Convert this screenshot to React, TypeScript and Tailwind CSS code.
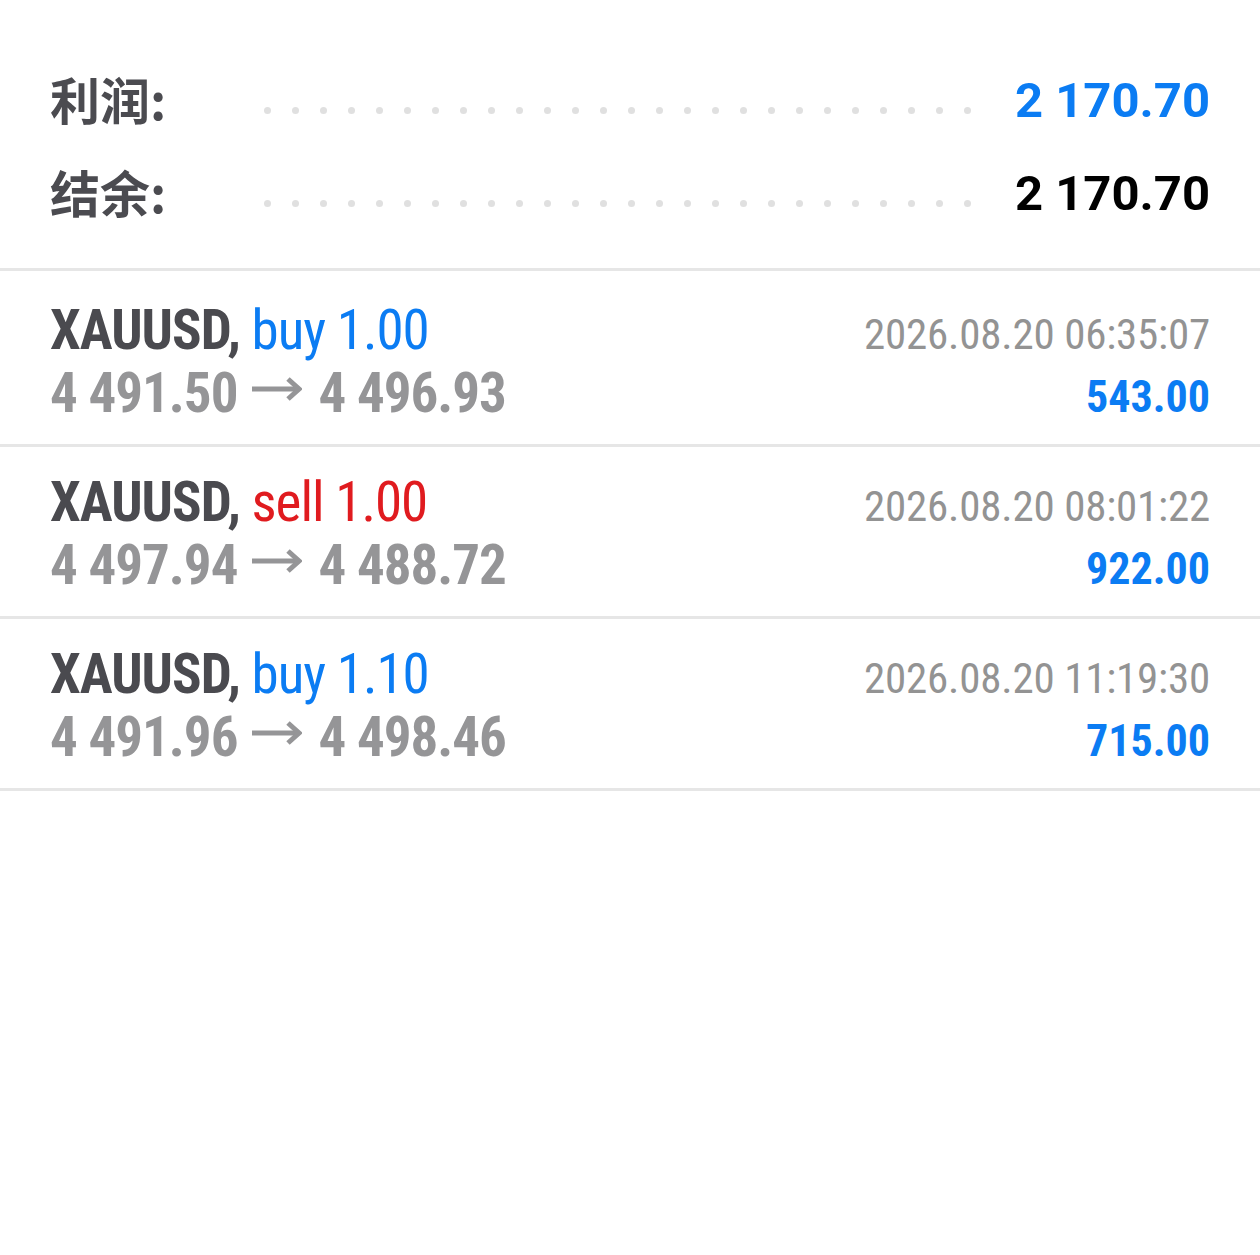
import React from "react";

const trades = [
  { side: "buy", vol: "1.00", open: "4 491.50", close: "4 496.93", time: "2026.08.20 06:35:07", profit: "543.00" },
  { side: "sell", vol: "1.00", open: "4 497.94", close: "4 488.72", time: "2026.08.20 08:01:22", profit: "922.00" },
  { side: "buy", vol: "1.10", open: "4 491.96", close: "4 498.46", time: "2026.08.20 11:19:30", profit: "715.00" },
];

function Dots() {
  return (
    <div className="flex-1 flex justify-between items-center h-[7px] mt-[19px] ml-[98px] mr-[44px]">
      {Array.from({ length: 26 }).map((_, i) => (
        <span key={i} className="block w-[7px] h-[7px] rounded-full bg-[#e0e0e0]" />
      ))}
    </div>
  );
}

function SummaryRow({ label, value, valueClass }: { label: string; value: string; valueClass: string }) {
  return (
    <div className="flex items-center h-[93px]">
      <span className="text-[50px] leading-none font-bold text-[#4b4b50] mb-[6px] [font-family:'Noto_Sans_CJK_SC',sans-serif]">{label}</span>
      <Dots />
      <span className={`text-[49px] leading-none font-bold [font-family:Roboto,sans-serif] ${valueClass}`}>{value}</span>
    </div>
  );
}

function Arrow() {
  return (
    <svg
      width="50"
      height="24"
      viewBox="0 0 50 24"
      className="inline-block ml-[15px] mr-[16px] mb-[10px]"
      fill="none"
      stroke="#959597"
      strokeWidth="5"
      strokeLinecap="butt"
      strokeLinejoin="miter"
    >
      <path d="M0 12 H47" />
      <path d="M36 2 L47 12 L36 22" />
    </svg>
  );
}

export default function App() {
  return (
    <div className="w-[1260px] min-h-[1255px] bg-white [font-family:Roboto,sans-serif]">
      <div className="px-[50px] pt-[54px] pb-[28px]">
        <SummaryRow label="利润:" value="2 170.70" valueClass="text-[#0b7cf3]" />
        <SummaryRow label="结余:" value="2 170.70" valueClass="text-black" />
      </div>
      <div className="border-t-[3px] border-[#e6e6e6]">
        {trades.map((t, i) => (
          <div
            key={i}
            className={`border-b-[3px] border-[#e6e6e6] px-[50px] font-stretch-condensed ${
              i === 0 ? "h-[176px] pt-[30px]" : "h-[172px] pt-[26px]"
            }`}
          >
            <div className="flex justify-between items-baseline leading-[59px]">
              <span className="text-[55px] tracking-[-1px]">
                <span className="font-bold text-[#4a4a4f]">XAUUSD,</span>{" "}
                <span className={t.side === "buy" ? "text-[#0b7cf3]" : "text-[#e01b1f]"}>
                  {t.side} {t.vol}
                </span>
              </span>
              <span className="text-[43px] tracking-[-0.2px] text-[#939393]">{t.time}</span>
            </div>
            <div className="flex justify-between items-baseline leading-[59px]">
              <span className="text-[55px] tracking-[-1px] font-bold text-[#959597] flex items-center">
                <span>{t.open}</span>
                <Arrow />
                <span>{t.close}</span>
              </span>
              <span className="text-[44px] font-bold text-[#0b7cf3]">{t.profit}</span>
            </div>
          </div>
        ))}
      </div>
    </div>
  );
}
